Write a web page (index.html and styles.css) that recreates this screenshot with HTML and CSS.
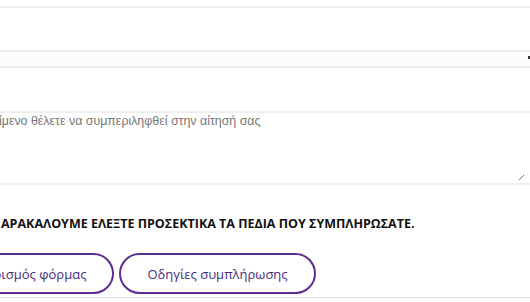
FILE: index.html
```html
<!DOCTYPE html>
<html lang="el">
<head>
	<meta charset="utf-8">
	<title>Αίτηση</title>
	<link rel="stylesheet" href="styles.css">
</head>
<body>
	<form class="form">
		<div class="field field-text"></div>
		<div class="field field-select"><span class="arrow"></span></div>
		<div class="field field-area">
			<span class="placeholder"><span class="cut">Οποιοδήποτε επιπλέον κε</span>ίμενο θέλετε να συμπεριληφθεί στην αίτησή σας</span>
			<span class="grip"></span>
		</div>
		<p class="notice"><span class="cut">Π</span>ΑΡΑΚΑΛΟΥΜΕ ΕΛΕΞΤΕ ΠΡΟΣΕΚΤΙΚΑ ΤΑ ΠΕΔΙΑ ΠΟΥ ΣΥΜΠΛΗΡΩΣΑΤΕ.</p>
		<div class="actions">
			<button type="reset" class="button b-clear">Καθαρισμός φόρμας</button>
			<button type="button" class="button">Οδηγίες συμπλήρωσης</button>
		</div>
	</form>
</body>
</html>
```

FILE: styles.css
```css
html,body{margin:0;padding:0;background:#fff;overflow:hidden;}
body{font-family:"Open Sans",sans-serif;height:302px;}

.form{display:flex;flex-direction:column;padding-top:6px;}
.field{box-sizing:border-box;border-top:2px solid #eeeeee;border-bottom:2px solid #eeeeee;position:relative;}
.field-text{height:46px;}
.field-select{height:16px;border-top:0;background:#fcfcfc;}
.field-select .arrow{position:absolute;right:0;top:4px;width:2px;height:3px;background:#333;}
.field-area{height:74px;margin-top:43px;padding:1px 0 0;}
.placeholder{display:block;font-family:"Liberation Sans",Arial,sans-serif;font-size:12.4px;color:#777;white-space:nowrap;margin-left:-1px;}
.cut{display:none;}
.grip{position:absolute;right:6px;bottom:3px;width:5px;height:5px;background:linear-gradient(135deg,transparent 45%,#777 45%,#777 55%,transparent 55%);}

.notice{margin:30px 0 0 1px;font-family:"Open Sans",sans-serif;font-weight:700;font-size:12.5px;color:#111;white-space:nowrap;}

.actions{display:flex;gap:5px;margin:21px 0 0 -66px;padding-bottom:3px;border-bottom:1px solid #dddddd;}
.button{box-sizing:border-box;height:41px;padding:0 26px;border:2px solid #5c2d91;border-radius:21px;background:#fff;color:#432c7c;font-family:"Open Sans",sans-serif;font-size:13px;white-space:nowrap;}
```
